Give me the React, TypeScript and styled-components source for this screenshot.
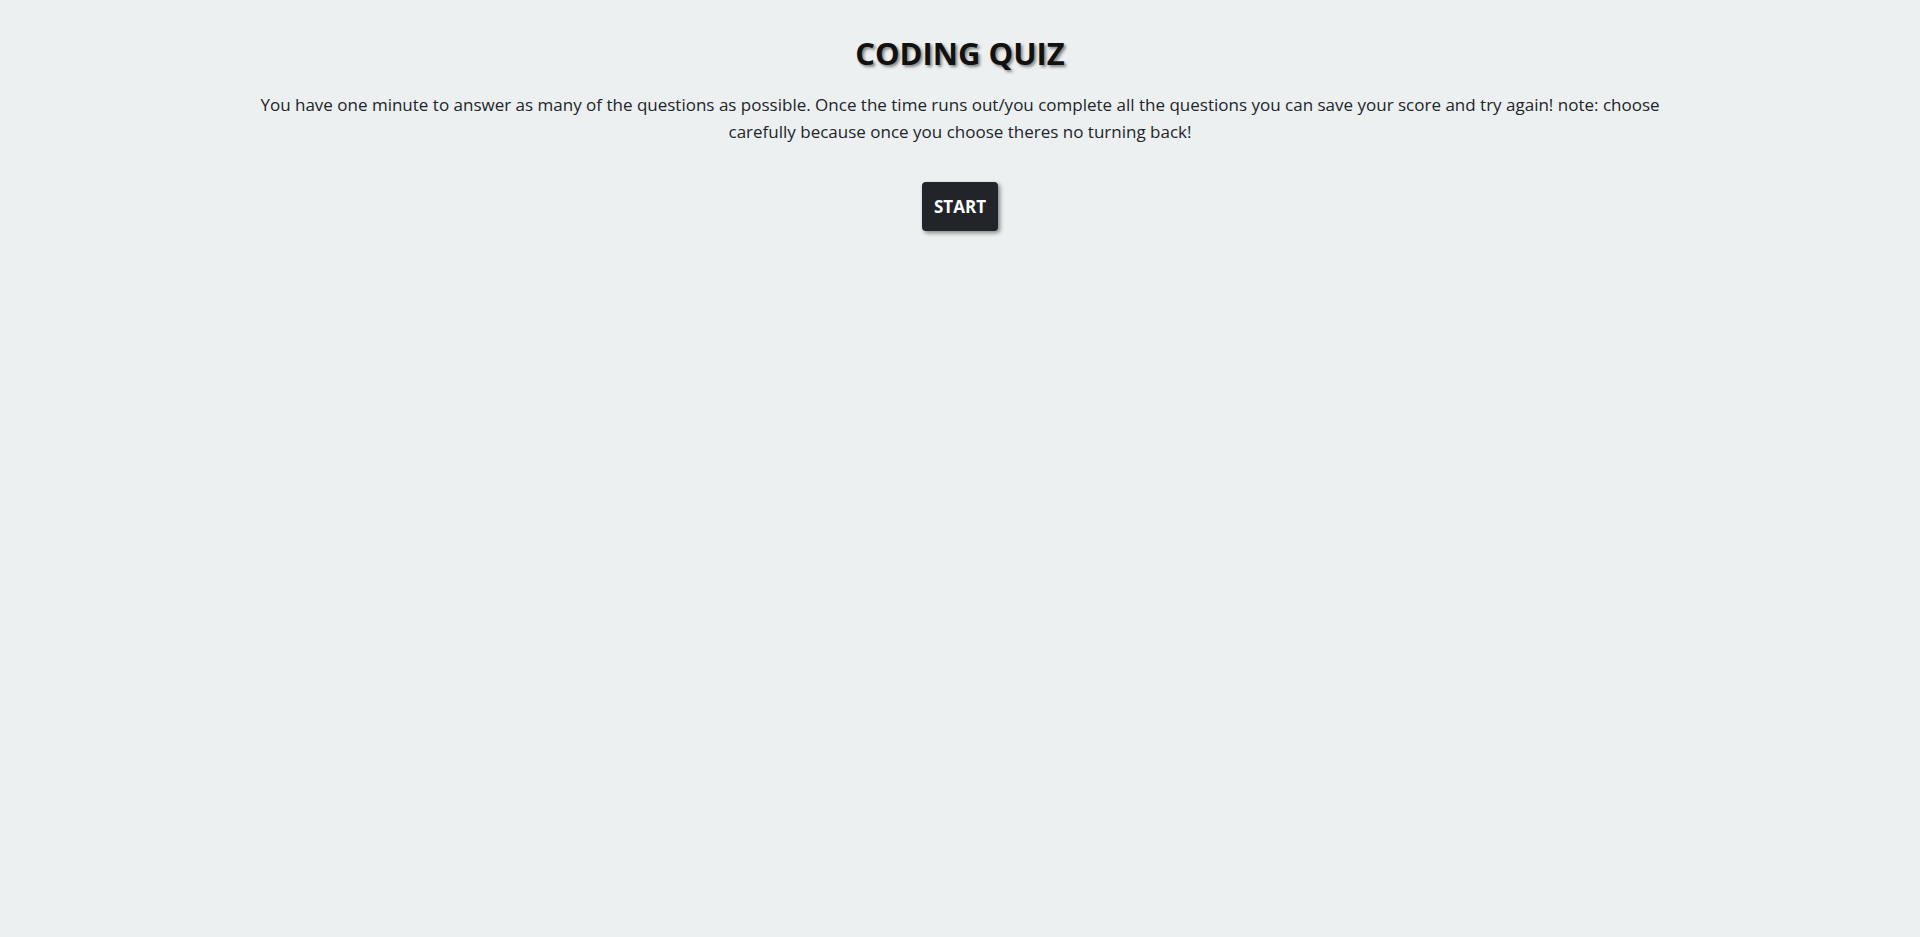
import React from "react";
import styled, { createGlobalStyle } from "styled-components";

const Global = createGlobalStyle`
  html, body { margin: 0; padding: 0; }
  body {
    background: #ecf0f1;
    font-family: "Open Sans", "Noto Sans", "Liberation Sans", sans-serif;
    color: #212529;
    min-height: 100vh;
  }
`;

const Main = styled.main`
  display: flex;
  flex-direction: column;
  align-items: center;
  padding-top: 35px;
`;

const Title = styled.h1`
  margin: 0;
  font-size: 31px;
  line-height: 1.2;
  font-weight: 700;
  color: #111;
  text-shadow: 2px 2px 3px rgba(0, 0, 0, 0.45);
`;

const Intro = styled.p`
  margin: 19px 0 0;
  max-width: 1440px;
  text-align: center;
  font-size: 17px;
  line-height: 27px;
  color: #212529;
`;

const StartButton = styled.button`
  margin-top: 37px;
  height: 49px;
  padding: 0 12px;
  background: #212529;
  color: #fff;
  border: none;
  border-radius: 4px;
  font-family: inherit;
  font-size: 17px;
  font-weight: 700;
  box-shadow: 2px 2px 4px rgba(0, 0, 0, 0.45);
  cursor: pointer;
`;

export default function App() {
  return (
    <>
      <Global />
      <Main>
        <Title>CODING QUIZ</Title>
        <Intro>
          You have one minute to answer as many of the questions as possible. Once the time runs out/you complete all the questions you can save your score and try again! note: choose carefully because once you choose theres no turning back!
        </Intro>
        <StartButton>START</StartButton>
      </Main>
    </>
  );
}
